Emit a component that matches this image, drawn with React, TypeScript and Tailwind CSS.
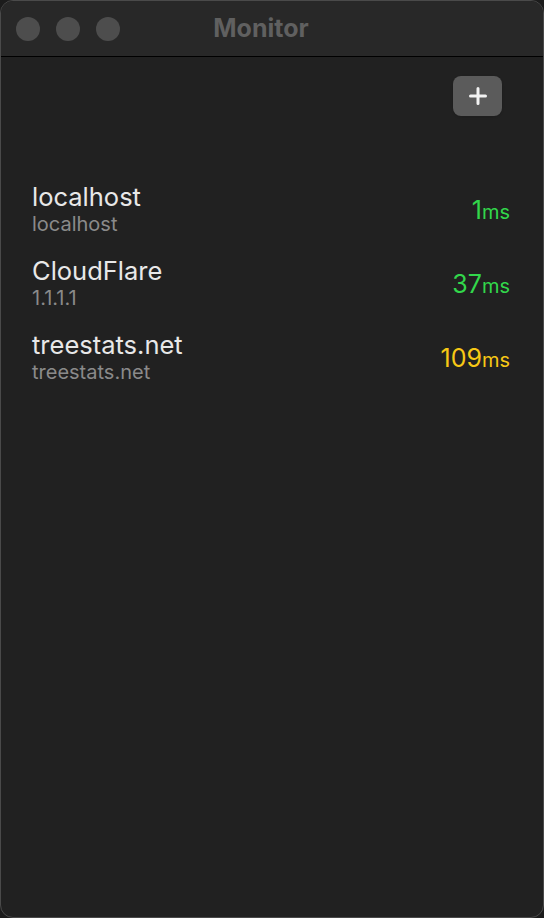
import React from 'react';

interface Host {
  name: string;
  address: string;
  latency: number;
}

const hosts: Host[] = [
  { name: 'localhost', address: 'localhost', latency: 1 },
  { name: 'CloudFlare', address: '1.1.1.1', latency: 37 },
  { name: 'treestats.net', address: 'treestats.net', latency: 109 },
];

const font = { fontFamily: 'Inter, "Noto Sans", sans-serif' };

export default function App() {
  return (
    <div className="h-[918px] w-[544px] bg-[#1c1c1c]" style={font}>
      <div className="flex h-full flex-col overflow-hidden rounded-[13px] border border-[#4a4a4a] bg-[#212121]">
        <TitleBar />
        <main className="flex flex-1 flex-col">
          <div className="flex justify-end pr-[41px] pt-[19px]">
            <AddButton />
          </div>
          <ul className="mt-[66px] flex flex-col gap-[19px]">
            {hosts.map((h) => (
              <HostRow key={h.name} host={h} />
            ))}
          </ul>
        </main>
      </div>
    </div>
  );
}

function TitleBar() {
  return (
    <header className="relative flex h-[56px] shrink-0 items-center border-b border-black bg-[#282828]">
      <div className="flex items-center gap-[16px] pl-[15px]">
        <span className="h-[24px] w-[24px] rounded-full bg-[#4d4d4d]" />
        <span className="h-[24px] w-[24px] rounded-full bg-[#4d4d4d]" />
        <span className="h-[24px] w-[24px] rounded-full bg-[#4d4d4d]" />
      </div>
      <h1 className="absolute inset-x-0 pr-[22px] text-center text-[25px] font-bold text-[#606060]">Monitor</h1>
    </header>
  );
}

function AddButton() {
  return (
    <button className="flex h-[40px] w-[49px] items-center justify-center rounded-[8px] bg-[#5b5b5b] shadow-sm">
      <svg width="20" height="20" viewBox="0 0 20 20" fill="none">
        <path d="M10 2.5v15M2.5 10h15" stroke="#f2f2f2" strokeWidth="3" strokeLinecap="round" />
      </svg>
    </button>
  );
}

function HostRow({ host }: { host: Host }) {
  const color = host.latency < 100 ? 'text-[#32d74b]' : 'text-[#f7c815]';
  return (
    <li className="flex items-center justify-between pl-[31px] pr-[33px]">
      <div className="flex flex-col">
        <span className="text-[25.5px] leading-[29px] text-[#e8e8e8]">{host.name}</span>
        <span className="mt-[1px] text-[20px] leading-[25px] text-[#8a8a8a]">{host.address}</span>
      </div>
      <div className={`mt-[4px] flex items-baseline ${color}`}>
        <span className="text-[25px] leading-[29px]">{host.latency}</span>
        <span className="text-[20px]">ms</span>
      </div>
    </li>
  );
}
